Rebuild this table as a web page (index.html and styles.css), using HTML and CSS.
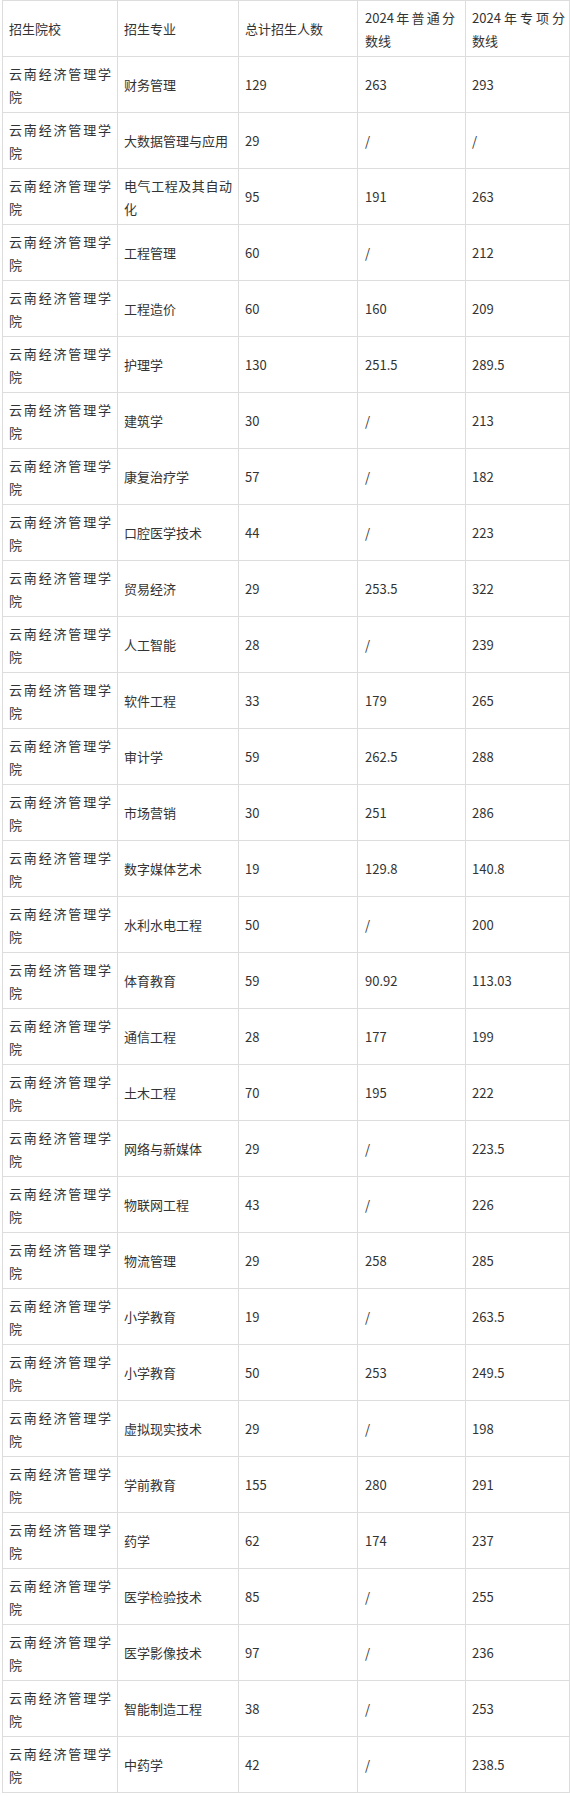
FILE: index.html
```html
<!DOCTYPE html>
<html lang="zh-CN">
<head>
<meta charset="utf-8">
<title>云南经济管理学院 招生专业分数线</title>
<link rel="stylesheet" href="styles.css">
</head>
<body>
<div class="wrap">
<table class="score-table">
<colgroup>
<col class="c1"><col class="c2"><col class="c3"><col class="c4"><col class="c5">
</colgroup>
<thead>
<tr><td>招生院校</td><td>招生专业</td><td>总计招生人数</td><td class="fourth">2024年普通分数线</td><td class="last">2024年专项分数线</td></tr>
</thead>
<tbody>
<tr><td>云南经济管理学院</td><td>财务管理</td><td>129</td><td class="fourth">263</td><td class="last">293</td></tr>
<tr><td>云南经济管理学院</td><td>大数据管理与应用</td><td>29</td><td class="fourth">/</td><td class="last">/</td></tr>
<tr><td>云南经济管理学院</td><td>电气工程及其自动化</td><td>95</td><td class="fourth">191</td><td class="last">263</td></tr>
<tr><td>云南经济管理学院</td><td>工程管理</td><td>60</td><td class="fourth">/</td><td class="last">212</td></tr>
<tr><td>云南经济管理学院</td><td>工程造价</td><td>60</td><td class="fourth">160</td><td class="last">209</td></tr>
<tr><td>云南经济管理学院</td><td>护理学</td><td>130</td><td class="fourth">251.5</td><td class="last">289.5</td></tr>
<tr><td>云南经济管理学院</td><td>建筑学</td><td>30</td><td class="fourth">/</td><td class="last">213</td></tr>
<tr><td>云南经济管理学院</td><td>康复治疗学</td><td>57</td><td class="fourth">/</td><td class="last">182</td></tr>
<tr><td>云南经济管理学院</td><td>口腔医学技术</td><td>44</td><td class="fourth">/</td><td class="last">223</td></tr>
<tr><td>云南经济管理学院</td><td>贸易经济</td><td>29</td><td class="fourth">253.5</td><td class="last">322</td></tr>
<tr><td>云南经济管理学院</td><td>人工智能</td><td>28</td><td class="fourth">/</td><td class="last">239</td></tr>
<tr><td>云南经济管理学院</td><td>软件工程</td><td>33</td><td class="fourth">179</td><td class="last">265</td></tr>
<tr><td>云南经济管理学院</td><td>审计学</td><td>59</td><td class="fourth">262.5</td><td class="last">288</td></tr>
<tr><td>云南经济管理学院</td><td>市场营销</td><td>30</td><td class="fourth">251</td><td class="last">286</td></tr>
<tr><td>云南经济管理学院</td><td>数字媒体艺术</td><td>19</td><td class="fourth">129.8</td><td class="last">140.8</td></tr>
<tr><td>云南经济管理学院</td><td>水利水电工程</td><td>50</td><td class="fourth">/</td><td class="last">200</td></tr>
<tr><td>云南经济管理学院</td><td>体育教育</td><td>59</td><td class="fourth">90.92</td><td class="last">113.03</td></tr>
<tr><td>云南经济管理学院</td><td>通信工程</td><td>28</td><td class="fourth">177</td><td class="last">199</td></tr>
<tr><td>云南经济管理学院</td><td>土木工程</td><td>70</td><td class="fourth">195</td><td class="last">222</td></tr>
<tr><td>云南经济管理学院</td><td>网络与新媒体</td><td>29</td><td class="fourth">/</td><td class="last">223.5</td></tr>
<tr><td>云南经济管理学院</td><td>物联网工程</td><td>43</td><td class="fourth">/</td><td class="last">226</td></tr>
<tr><td>云南经济管理学院</td><td>物流管理</td><td>29</td><td class="fourth">258</td><td class="last">285</td></tr>
<tr><td>云南经济管理学院</td><td>小学教育</td><td>19</td><td class="fourth">/</td><td class="last">263.5</td></tr>
<tr><td>云南经济管理学院</td><td>小学教育</td><td>50</td><td class="fourth">253</td><td class="last">249.5</td></tr>
<tr><td>云南经济管理学院</td><td>虚拟现实技术</td><td>29</td><td class="fourth">/</td><td class="last">198</td></tr>
<tr><td>云南经济管理学院</td><td>学前教育</td><td>155</td><td class="fourth">280</td><td class="last">291</td></tr>
<tr><td>云南经济管理学院</td><td>药学</td><td>62</td><td class="fourth">174</td><td class="last">237</td></tr>
<tr><td>云南经济管理学院</td><td>医学检验技术</td><td>85</td><td class="fourth">/</td><td class="last">255</td></tr>
<tr><td>云南经济管理学院</td><td>医学影像技术</td><td>97</td><td class="fourth">/</td><td class="last">236</td></tr>
<tr><td>云南经济管理学院</td><td>智能制造工程</td><td>38</td><td class="fourth">/</td><td class="last">253</td></tr>
<tr><td>云南经济管理学院</td><td>中药学</td><td>42</td><td class="fourth">/</td><td class="last">238.5</td></tr>
</tbody>
</table>
</div>
</body>
</html>
```
FILE: styles.css
```css
html, body {
  margin: 0;
  padding: 0;
  background: #ffffff;
}

.wrap {
  padding: 0 1px 0 2px;
}

.score-table {
  width: 567px;
  border-collapse: collapse;
  table-layout: fixed;
  font-family: "Noto Sans CJK SC", "Noto Sans", sans-serif;
  font-size: 13px;
  line-height: 23px;
  color: #333333;
}

.score-table .c1 { width: 115px; }
.score-table .c2 { width: 121px; }
.score-table .c3 { width: 119px; }
.score-table .c4 { width: 108px; }
.score-table .c5 { width: 104px; }

.score-table td {
  border: 1px solid #dddddd;
  padding: 4.5px 6px;
  vertical-align: middle;
  text-align: justify;
  word-break: break-all;
}

.score-table td.fourth {
  padding-left: 7px;
  padding-right: 10px;
}

.score-table td.last {
  padding-right: 4px;
}
```
